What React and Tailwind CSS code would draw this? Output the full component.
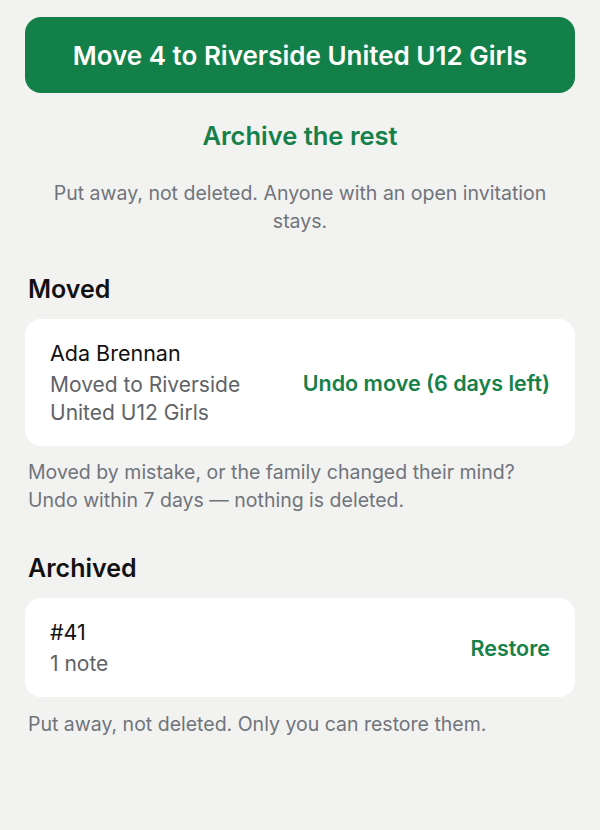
import React from 'react';

const Card = ({ title, lines, action }) => (
  <div className="mt-[14px] flex items-center justify-between gap-4 rounded-[16px] bg-white px-[25px] pt-[19px] pb-[19px]">
    <div className="min-w-0 flex-1">
      <div className="text-[21.5px] leading-[30px] text-[#111111]">{title}</div>
      <div className="mt-[3px] text-[21px] leading-[28px] text-[#5f6368]">{lines}</div>
    </div>
    <button className="shrink-0 text-[21.5px] font-semibold leading-[28px] text-[#16804a]">{action}</button>
  </div>
);

const App = () => {
  return (
    <div className="min-h-[830px] bg-[#f2f2f1] px-[25px] pt-[17px] font-['Inter',sans-serif]">
      <button className="flex h-[76px] w-full items-center justify-center rounded-[16px] bg-[#13804a] text-[26px] font-semibold text-white">
        Move 4 to Riverside United U12 Girls
      </button>
      <button className="mt-[15px] flex h-[56px] w-full items-center justify-center text-[25.5px] font-semibold text-[#16804a]">
        Archive the rest
      </button>
      <p className="mt-[15px] px-4 text-center text-[19.5px] leading-[28px] text-[#70747b]">
        Put away, not deleted. Anyone with an open invitation stays.
      </p>

      <h2 className="mt-[38px] pl-[3px] text-[25px] font-semibold leading-[32px] text-[#111111]">Moved</h2>
      <Card title="Ada Brennan" lines="Moved to Riverside United U12 Girls" action="Undo move (6 days left)" />
      <p className="mt-[12px] pl-[3px] text-[19.5px] leading-[28px] text-[#70747b]">
        Moved by mistake, or the family changed their mind?
        <br />
        Undo within 7 days — nothing is deleted.
      </p>

      <h2 className="mt-[38px] pl-[3px] text-[25px] font-semibold leading-[32px] text-[#111111]">Archived</h2>
      <Card title="#41" lines="1 note" action="Restore" />
      <p className="mt-[13px] pl-[3px] text-[19.5px] leading-[28px] text-[#70747b]">
        Put away, not deleted. Only you can restore them.
      </p>
    </div>
  );
};

export default App;
